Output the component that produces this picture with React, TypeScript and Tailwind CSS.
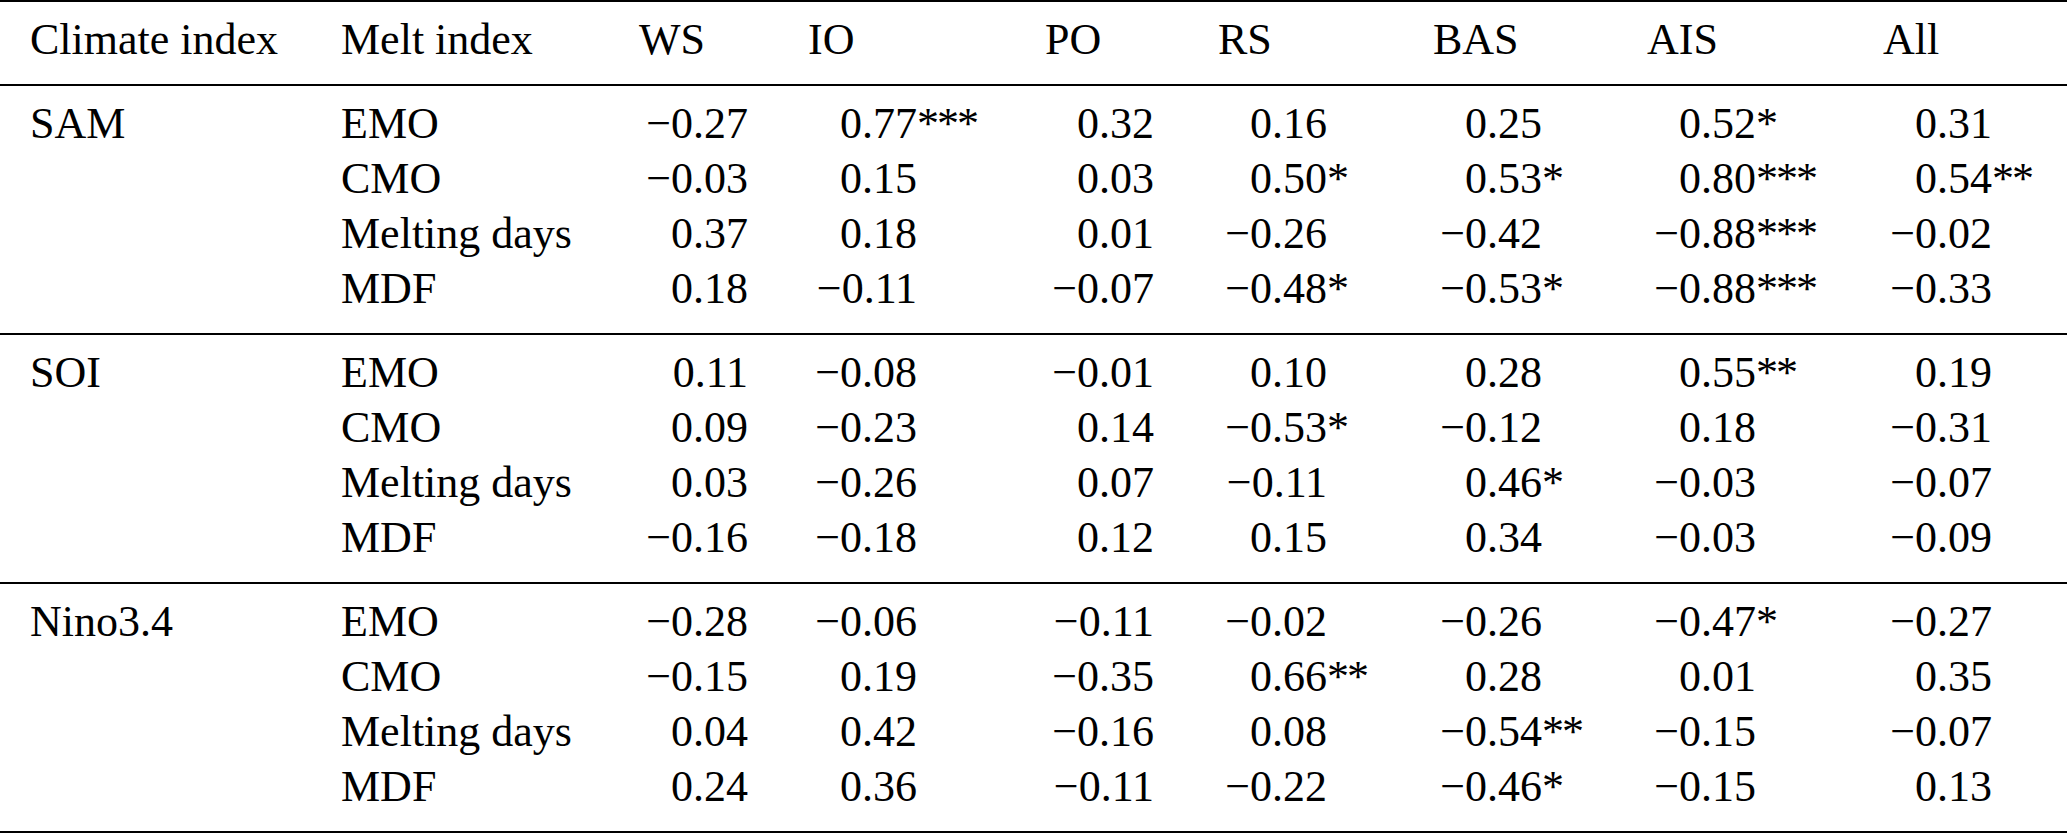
import React from 'react'

type Group = {
    climate: string
    rows: { melt: string; values: string[] }[]
}

const regions = ['WS', 'IO', 'PO', 'RS', 'BAS', 'AIS', 'All']

const groups: Group[] = [
    {
        climate: 'SAM',
        rows: [
            { melt: 'EMO', values: ['−0.27', '0.77***', '0.32', '0.16', '0.25', '0.52*', '0.31'] },
            { melt: 'CMO', values: ['−0.03', '0.15', '0.03', '0.50*', '0.53*', '0.80***', '0.54**'] },
            { melt: 'Melting days', values: ['0.37', '0.18', '0.01', '−0.26', '−0.42', '−0.88***', '−0.02'] },
            { melt: 'MDF', values: ['0.18', '−0.11', '−0.07', '−0.48*', '−0.53*', '−0.88***', '−0.33'] },
        ],
    },
    {
        climate: 'SOI',
        rows: [
            { melt: 'EMO', values: ['0.11', '−0.08', '−0.01', '0.10', '0.28', '0.55**', '0.19'] },
            { melt: 'CMO', values: ['0.09', '−0.23', '0.14', '−0.53*', '−0.12', '0.18', '−0.31'] },
            { melt: 'Melting days', values: ['0.03', '−0.26', '0.07', '−0.11', '0.46*', '−0.03', '−0.07'] },
            { melt: 'MDF', values: ['−0.16', '−0.18', '0.12', '0.15', '0.34', '−0.03', '−0.09'] },
        ],
    },
    {
        climate: 'Nino3.4',
        rows: [
            { melt: 'EMO', values: ['−0.28', '−0.06', '−0.11', '−0.02', '−0.26', '−0.47*', '−0.27'] },
            { melt: 'CMO', values: ['−0.15', '0.19', '−0.35', '0.66**', '0.28', '0.01', '0.35'] },
            { melt: 'Melting days', values: ['0.04', '0.42', '−0.16', '0.08', '−0.54**', '−0.15', '−0.07'] },
            { melt: 'MDF', values: ['0.24', '0.36', '−0.11', '−0.22', '−0.46*', '−0.15', '0.13'] },
        ],
    },
]

const rowGrid = 'grid grid-cols-[311px_298px_169px_237px_173px_215px_214px_236px_1fr] pl-[30px] h-[55px] leading-[55px] whitespace-nowrap'

function Value({ text }: { text: string }) {
    const i = text.indexOf('*')
    const num = i === -1 ? text : text.slice(0, i)
    const stars = i === -1 ? '' : text.slice(i)
    return (
        <div>
            <span className="inline-block w-[109px] text-right">{num}</span>
            {stars && <span className="tracking-[-2px]">{stars}</span>}
        </div>
    )
}

export default function App() {
    return (
        <div
            className="w-full min-h-screen bg-white text-black text-[44px]"
            style={{ fontFamily: '"Liberation Serif", "Times New Roman", serif' }}
        >
            <div className="border-t-2 border-black">
                {/* header */}
                <div className="pt-[10px] pb-[17px] border-b-2 border-black">
                    <div className={rowGrid}>
                        <div>Climate index</div>
                        <div>Melt index</div>
                        {regions.map((r) => (
                            <div key={r}>{r}</div>
                        ))}
                    </div>
                </div>

                {groups.map((g) => (
                    <div key={g.climate} className="pt-[10px] pb-[17px] border-b-2 border-black">
                        {g.rows.map((row, ri) => (
                            <div key={row.melt} className={rowGrid}>
                                <div>{ri === 0 ? g.climate : ''}</div>
                                <div>{row.melt}</div>
                                {row.values.map((v, vi) => (
                                    <Value key={vi} text={v} />
                                ))}
                            </div>
                        ))}
                    </div>
                ))}
            </div>
        </div>
    )
}
